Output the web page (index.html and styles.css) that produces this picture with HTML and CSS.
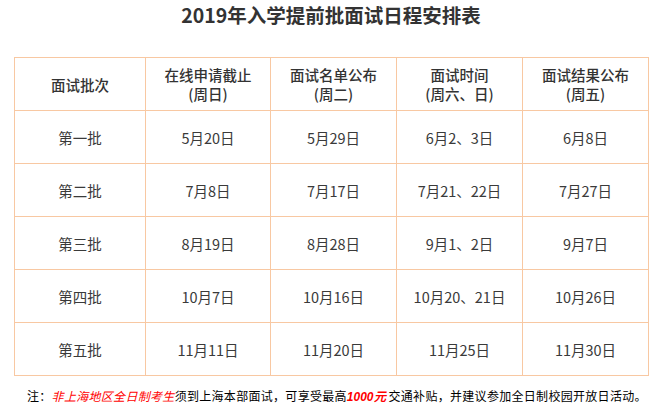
FILE: index.html
```html
<!DOCTYPE html>
<html lang="zh-CN">
<head>
<meta charset="utf-8">
<title>2019年入学提前批面试日程安排表</title>
<link rel="stylesheet" href="styles.css">
</head>
<body>
<div class="page">
  <h1 class="title">2019年入学提前批面试日程安排表</h1>
  <table class="schedule">
    <colgroup>
      <col class="c1"><col class="c2"><col class="c3"><col class="c4"><col class="c5">
    </colgroup>
    <thead>
      <tr>
        <th>面试批次</th>
        <th>在线申请截止<br>(周日)</th>
        <th>面试名单公布<br>(周二)</th>
        <th>面试时间<br>(周六、日)</th>
        <th>面试结果公布<br>(周五)</th>
      </tr>
    </thead>
    <tbody>
      <tr><td>第一批</td><td>5月20日</td><td>5月29日</td><td>6月2、3日</td><td>6月8日</td></tr>
      <tr><td>第二批</td><td>7月8日</td><td>7月17日</td><td>7月21、22日</td><td>7月27日</td></tr>
      <tr><td>第三批</td><td>8月19日</td><td>8月28日</td><td>9月1、2日</td><td>9月7日</td></tr>
      <tr><td>第四批</td><td>10月7日</td><td>10月16日</td><td>10月20、21日</td><td>10月26日</td></tr>
      <tr><td>第五批</td><td>11月11日</td><td>11月20日</td><td>11月25日</td><td>11月30日</td></tr>
    </tbody>
  </table>
  <p class="note">注：<em class="hl">非上海地区全日制考生</em>须到上海本部面试，可享受最高<strong class="money">1000元</strong> 交通补贴，并建议参加全日制校园开放日活动。</p>
</div>
</body>
</html>
```

FILE: styles.css
```css
html, body {
  margin: 0;
  padding: 0;
  background: #ffffff;
}

.page {
  width: 670px;
  padding: 0 0 0 14px;
  box-sizing: border-box;
  font-family: "Noto Sans CJK SC", "Noto Sans", sans-serif;
  color: #333333;
}

.title {
  margin: 0;
  padding-top: 2px;
  width: 634px;
  text-align: center;
  font-size: 19.5px;
  line-height: 26px;
  font-weight: bold;
  color: #333333;
}

.schedule {
  margin-top: 29px;
  border-collapse: collapse;
  table-layout: fixed;
  width: 635px;
  font-size: 14.5px;
}

.schedule .c1 { width: 131px; }
.schedule .c2 { width: 125px; }
.schedule .c3 { width: 126px; }
.schedule .c4 { width: 126px; }
.schedule .c5 { width: 126px; }

.schedule th,
.schedule td {
  border: 1px solid #f8c8a2;
  height: 52px;
  padding: 0;
  text-align: center;
  vertical-align: middle;
  line-height: 19px;
  color: #3a3a3a;
}

.schedule th {
  font-weight: 500;
  color: #333333;
}

.note {
  margin: 12px 0 0 13px;
  font-size: 12px;
  line-height: 16px;
  letter-spacing: 0.3px;
  color: #000000;
  white-space: nowrap;
}

.hl {
  color: #ff0000;
  font-style: italic;
}

.money {
  color: #ff0000;
  font-style: italic;
  font-weight: bold;
  font-family: "Liberation Sans", Arial, sans-serif;
  letter-spacing: 0;
}
```
